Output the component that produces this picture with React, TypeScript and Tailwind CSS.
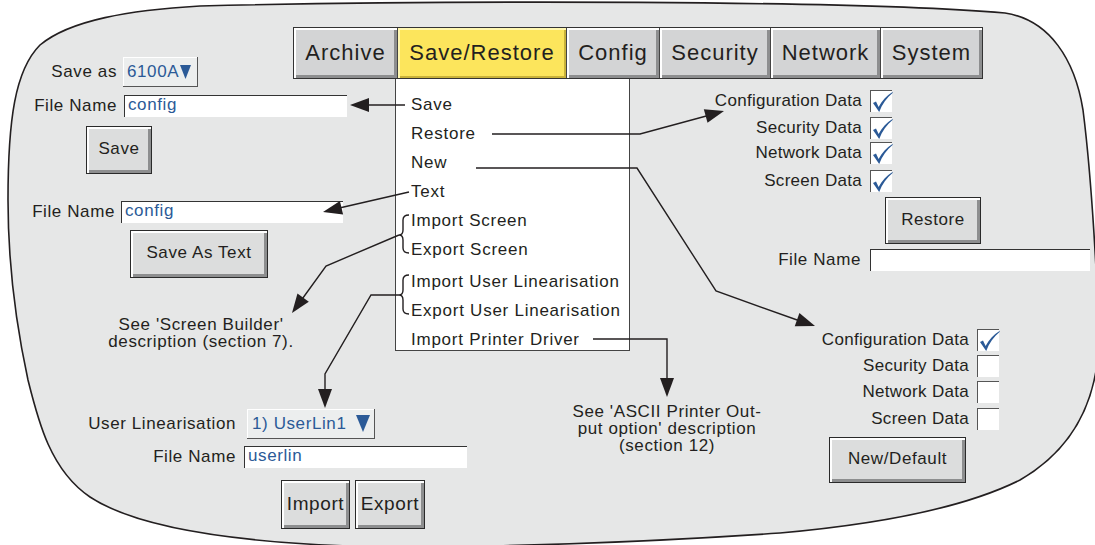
import React from 'react';

const ink = '#231f20';

function head(tx: number, ty: number, fx: number, fy: number, len = 19, half = 7) {
    const dx = tx - fx;
    const dy = ty - fy;
    const d = Math.hypot(dx, dy);
    const ux = dx / d;
    const uy = dy / d;
    const bx = tx - ux * len;
    const by = ty - uy * len;
    return `${tx},${ty} ${bx - uy * half},${by + ux * half} ${bx + uy * half},${by - ux * half}`;
}

function Tick() {
    return (
        <svg width="22" height="22" viewBox="0 0 22 22" className="block">
            <path d="M2 12 L5 10.5 L7.6 16 C11 9.5 15.5 5 21.5 1 L21.8 1.8 C15.8 7 11.2 13 8.2 21 Z" fill="#2b5a97" />
        </svg>
    );
}

function CheckRow({ label, on, labelW, className = '' }: { label: string; on?: boolean; labelW: string; className?: string }) {
    return (
        <div className={`flex items-center h-[22px] ${className}`}>
            <span className={`${labelW} text-right pr-[8px] tracking-[0.3px]`}>{label}</span>
            <div className="w-[22px] h-[22px] bg-white border-t border-l border-[#555]">{on && <Tick />}</div>
        </div>
    );
}

function Btn({ children, className = '' }: { children: React.ReactNode; className?: string }) {
    return (
        <div className={`flex items-center justify-center pb-[2px] border border-[#2a2a2a] bg-[#dcdddd] shadow-[inset_2px_2px_0_#ffffff,inset_-3px_-3px_0_#8d8e8f] ${className}`}>
            {children}
        </div>
    );
}

function Field({ value, className = '' }: { value?: string; className?: string }) {
    return (
        <div className={`h-[22px] bg-white border-t border-l border-[#333] text-[#2b5a97] pl-[3px] leading-[18px] ${className}`}>
            {value}
        </div>
    );
}

const tabs = [
    { name: 'Archive', w: 'w-[104px]' },
    { name: 'Save/Restore', w: 'w-[169px]', on: true },
    { name: 'Config', w: 'w-[93px]' },
    { name: 'Security', w: 'w-[111px]' },
    { name: 'Network', w: 'w-[110px]' },
    { name: 'System', w: 'w-[101px]' },
];

const menu = [
    { t: 'Save' },
    { t: 'Restore' },
    { t: 'New' },
    { t: 'Text' },
    { t: 'Import Screen' },
    { t: 'Export Screen' },
    { t: 'Import User Linearisation', gap: true },
    { t: 'Export User Linearisation' },
    { t: 'Import Printer Driver' },
];

export default function App() {
    return (
        <div className="relative w-[1095px] h-[545px] overflow-hidden bg-white font-['Liberation_Sans',Arial,sans-serif] text-[17px] leading-[20px] tracking-[0.6px] text-[#231f20]">
            <svg className="absolute inset-0" width="1095" height="545">
                <path
                    d="M200,6 C450,0 850,0 1005,13 C1050,20 1075,60 1083,110 C1092,180 1096,260 1099,330 C1100,400 1072,450 1020,480 C960,510 870,525 780,533 C650,542 500,547 380,547 C250,544 140,530 90,497 C50,470 38,420 28,380 C15,320 8,260 8,200 C8,120 15,70 40,45 C70,20 130,10 200,6 Z"
                    fill="#e6e7e7"
                    stroke={ink}
                    strokeWidth="1.6"
                />
            </svg>

            {/* tab bar */}
            <div className="absolute left-[293px] top-[27px] flex h-[52px] border border-[#333] text-[22px] tracking-[1px]">
                {tabs.map((t, i) => (
                    <div
                        key={t.name}
                        className={`${t.w} flex items-center justify-center pb-[1px] ${i < tabs.length - 1 ? 'border-r border-[#444]' : ''} ${t.on ? 'bg-[#fce55c] shadow-[inset_2px_2px_0_#fff7b0,inset_-2px_-2px_0_#c9b23a]' : 'bg-[#d3d4d5] shadow-[inset_2px_2px_0_#ffffff,inset_-3px_-3px_0_#8d8e8f]'}`}
                    >
                        {t.name}
                    </div>
                ))}
            </div>

            {/* drop-down menu */}
            <div className="absolute left-[395px] top-[79px] w-[235px] h-[272px] bg-white border-l border-r border-b border-[#444] pt-[12px] pl-[15px] tracking-[0.75px]">
                {menu.map((m) => (
                    <div key={m.t} className={`h-[29px] leading-[28px] ${m.gap ? 'mt-[3px]' : ''}`}>
                        {m.t}
                    </div>
                ))}
            </div>

            {/* save block */}
            <div className="absolute left-0 top-[57px] flex flex-col">
                <div className="flex items-center h-[30px]">
                    <span className="w-[117px] text-right">Save as</span>
                    <div className="ml-[6px] w-[75px] h-[30px] flex items-center pl-[4px] gap-[1px] bg-[#eceeee] border-r border-b border-[#555] shadow-[inset_1px_1px_0_#ffffff] text-[#2b5a97]">
                        6100A
                        <svg width="11" height="14" viewBox="0 0 11 14"><polygon points="0,0 11,0 5.5,14" fill="#2b5a97" /></svg>
                    </div>
                </div>
                <div className="flex items-center h-[22px] mt-[8px]">
                    <span className="w-[117px] text-right">File Name</span>
                    <Field value="config" className="ml-[7px] w-[223px]" />
                </div>
                <Btn className="mt-[9px] ml-[86px] w-[66px] h-[48px]">Save</Btn>
            </div>

            {/* save as text block */}
            <div className="absolute left-0 top-[201px] flex flex-col">
                <div className="flex items-center h-[22px]">
                    <span className="w-[115px] text-right">File Name</span>
                    <Field value="config" className="ml-[6px] w-[222px]" />
                </div>
                <Btn className="mt-[7px] ml-[130px] w-[138px] h-[48px]">Save As Text</Btn>
            </div>

            <div className="absolute left-[101px] top-[316px] w-[200px] text-center leading-[17px]">
                See 'Screen Builder'
                <br />
                description (section 7).
            </div>

            {/* user linearisation block */}
            <div className="absolute left-0 top-[409px] flex flex-col">
                <div className="flex items-center h-[30px]">
                    <span className="w-[236px] text-right">User Linearisation</span>
                    <div className="ml-[11px] w-[128px] h-[30px] flex items-center pl-[5px] bg-[#eceeee] border-r border-b border-[#555] shadow-[inset_1px_1px_0_#ffffff] text-[#2b5a97]">
                        1) UserLin1
                        <svg className="ml-[10px]" width="14" height="17" viewBox="0 0 14 17"><polygon points="0,0 14,0 7,17" fill="#2b5a97" /></svg>
                    </div>
                </div>
                <div className="flex items-center h-[22px] mt-[7px]">
                    <span className="w-[236px] text-right">File Name</span>
                    <Field value="userlin" className="ml-[8px] w-[223px]" />
                </div>
                <div className="flex gap-[5px] mt-[12px] ml-[281px] text-[19px]">
                    <Btn className="w-[69px] h-[49px]">Import</Btn>
                    <Btn className="w-[70px] h-[49px]">Export</Btn>
                </div>
            </div>

            {/* restore block */}
            <div className="absolute left-[700px] top-[90px] flex flex-col">
                <CheckRow label="Configuration Data" on labelW="w-[170px]" />
                <CheckRow label="Security Data" on labelW="w-[170px]" className="mt-[5px]" />
                <CheckRow label="Network Data" on labelW="w-[170px]" className="mt-[3px]" />
                <CheckRow label="Screen Data" on labelW="w-[170px]" className="mt-[6px]" />
                <Btn className="mt-[5px] ml-[185px] w-[96px] h-[47px]">Restore</Btn>
                <div className="flex items-center h-[22px] mt-[5px]">
                    <span className="w-[170px] text-right pr-[9px]">File Name</span>
                    <Field className="w-[220px]" />
                </div>
            </div>

            {/* new block */}
            <div className="absolute left-[800px] top-[329px] flex flex-col">
                <CheckRow label="Configuration Data" on labelW="w-[177px]" />
                <CheckRow label="Security Data" labelW="w-[177px]" className="mt-[4px]" />
                <CheckRow label="Network Data" labelW="w-[177px]" className="mt-[4px]" />
                <CheckRow label="Screen Data" labelW="w-[177px]" className="mt-[5px]" />
                <Btn className="mt-[7px] ml-[29px] w-[137px] h-[46px]">New/Default</Btn>
            </div>

            <div className="absolute left-[567px] top-[403px] w-[200px] text-center leading-[17px]">
                See 'ASCII Printer Out-
                <br />
                put option' description
                <br />
                (section 12)
            </div>

            {/* arrows */}
            <svg className="absolute inset-0 pointer-events-none" width="1095" height="545">
                <g fill="none" stroke={ink} strokeWidth="1.4">
                    <polyline points="405,105 360,105" />
                    <polyline points="492,134 640,134 710,115" />
                    <polyline points="476,168 637,168 716,291 800,321" />
                    <polyline points="409,192 335,209" />
                    <polyline points="399,235 326,266 300,302" />
                    <polyline points="399,295 371,295 325,374 325,395" />
                    <polyline points="593,339 667,339 667,385" />
                    <path d="M409,215 Q403,215 403,220 L403,230 Q403,235 399,235 Q403,235 403,240 L403,248 Q403,253 409,253" />
                    <path d="M409,275 Q403,275 403,280 L403,290 Q403,295 399,295 Q403,295 403,300 L403,309 Q403,314 409,314" />
                </g>
                <g fill={ink}>
                    <polygon points={head(350, 105, 405, 105)} />
                    <polygon points={head(724, 111, 640, 134)} />
                    <polygon points={head(815, 326, 716, 291)} />
                    <polygon points={head(323, 212, 409, 192)} />
                    <polygon points={head(292, 313, 326, 266)} />
                    <polygon points={head(325, 408, 325, 374)} />
                    <polygon points={head(667, 397, 667, 339)} />
                </g>
            </svg>
        </div>
    );
}
